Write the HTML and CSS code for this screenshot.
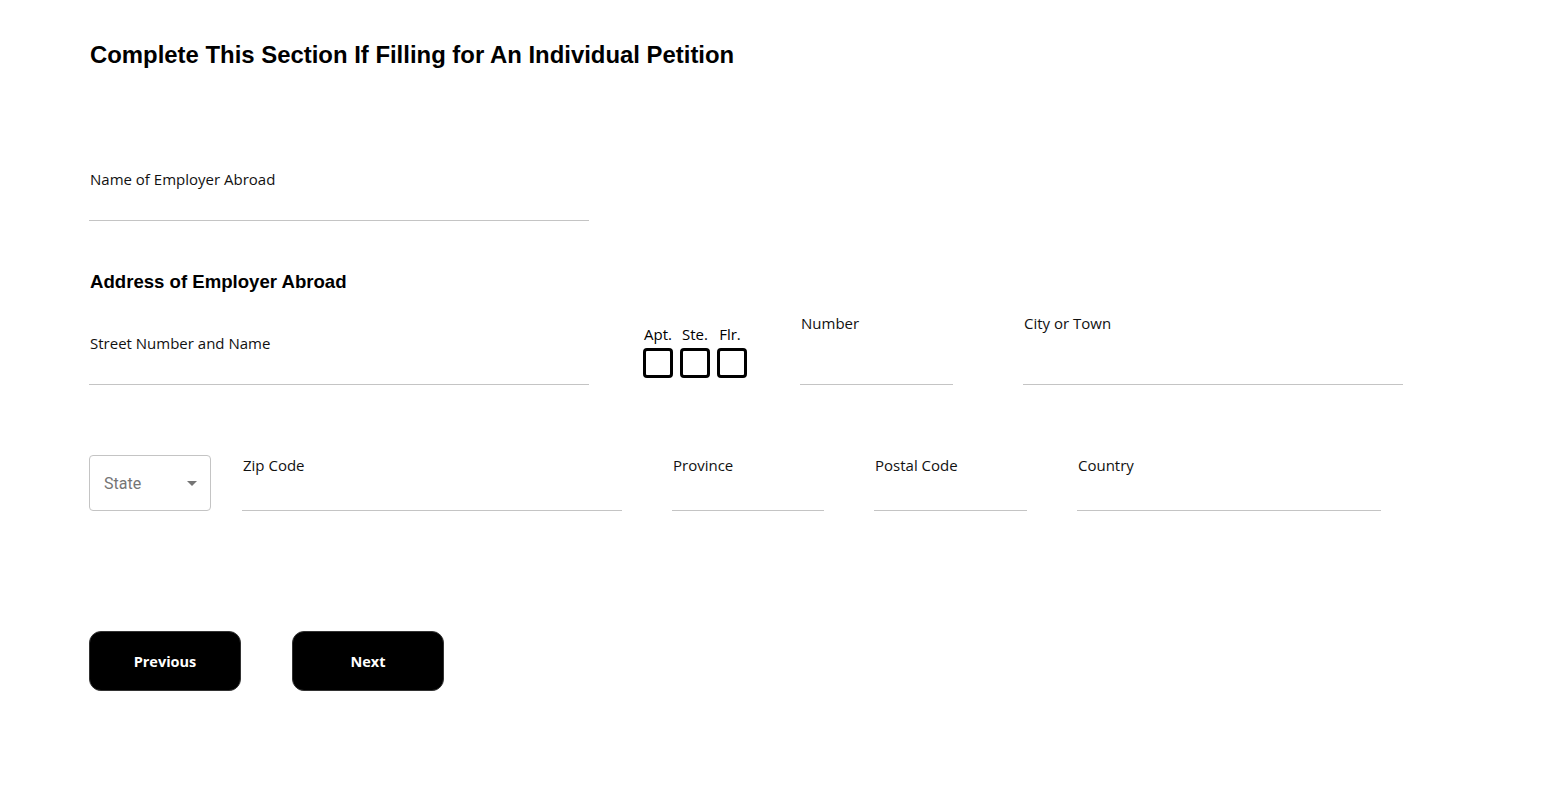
FILE: index.html
```html
<!DOCTYPE html>
<html>
<head>
<meta charset="utf-8">
<link rel="stylesheet" href="styles.css">
</head>
<body>
<main class="page">
  <h1 class="title">Complete This Section If Filling for An Individual Petition</h1>

  <div class="field field-name">
    <label class="label">Name of Employer Abroad</label>
    <div class="input w500"></div>
  </div>

  <h2 class="subtitle">Address of Employer Abroad</h2>

  <div class="row row1">
    <div class="field">
      <label class="label">Street Number and Name</label>
      <div class="input w500"></div>
    </div>
    <div class="unit-group">
      <div class="unit"><span class="unit-label">Apt.</span><span class="box"></span></div>
      <div class="unit"><span class="unit-label">Ste.</span><span class="box"></span></div>
      <div class="unit"><span class="unit-label unit-label-flr">Flr.</span><span class="box"></span></div>
    </div>
    <div class="field field-number">
      <label class="label">Number</label>
      <div class="input tall w153"></div>
    </div>
    <div class="field field-city">
      <label class="label">City or Town</label>
      <div class="input tall w380"></div>
    </div>
  </div>

  <div class="row row2">
    <div class="select">
      <span class="select-text">State</span>
      <span class="caret"></span>
    </div>
    <div class="field field-zip">
      <label class="label">Zip Code</label>
      <div class="input mid w380"></div>
    </div>
    <div class="field gap50">
      <label class="label">Province</label>
      <div class="input mid w152"></div>
    </div>
    <div class="field gap50">
      <label class="label">Postal Code</label>
      <div class="input mid w153"></div>
    </div>
    <div class="field gap50">
      <label class="label">Country</label>
      <div class="input mid w304"></div>
    </div>
  </div>

  <div class="actions">
    <button class="btn">Previous</button>
    <button class="btn">Next</button>
  </div>
</main>
</body>
</html>
```

FILE: styles.css
```css
html, body {
  margin: 0;
  padding: 0;
  background: #ffffff;
}

.page {
  padding: 40px 0 0 89px;
  font-family: "Open Sans", "Noto Sans", sans-serif;
  color: #000;
}

.title {
  margin: 0 0 0 1px;
  font-family: "Liberation Sans", Arial, sans-serif;
  font-weight: 700;
  font-size: 23.9px;
  line-height: 29px;
}

.field {
  display: flex;
  flex-direction: column;
}

.field-name {
  margin-top: 100px;
}

.label {
  display: block;
  font-size: 15px;
  line-height: 20px;
  color: #111;
  padding-left: 1px;
  white-space: nowrap;
}

.input {
  height: 31px;
  border-bottom: 1px solid #c4c4c4;
}

.input.tall { height: 51px; }
.input.mid { height: 35px; }

.w500 { width: 500px; }
.w380 { width: 380px; }
.w304 { width: 304px; }
.w153 { width: 153px; }
.w152 { width: 152px; }

.subtitle {
  margin: 50px 0 0 1px;
  font-family: "Liberation Sans", Arial, sans-serif;
  font-weight: 700;
  font-size: 18.6px;
  line-height: 21px;
}

.row {
  display: flex;
  align-items: flex-end;
}

.row1 {
  margin-top: 21px;
}

.unit-group {
  display: flex;
  gap: 7px;
  margin: 0 0 7px 54px;
}

.unit {
  display: flex;
  flex-direction: column;
  align-items: center;
  width: 30px;
}

.unit-label {
  font-size: 15px;
  line-height: 20px;
  margin-bottom: 4px;
  white-space: nowrap;
}

.unit-label-flr {
  margin-right: 4px;
}

.box {
  display: block;
  width: 24px;
  height: 24px;
  border: 3px solid #000;
  border-radius: 4px;
}

.field-number { margin-left: 53px; }
.field-city { margin-left: 70px; }

.row2 {
  margin-top: 70px;
}

.select {
  box-sizing: border-box;
  width: 122px;
  height: 56px;
  border: 1px solid #c4c4c4;
  border-radius: 4px;
  display: flex;
  align-items: center;
  padding: 0 13px 0 14px;
  font-family: Roboto, "Liberation Sans", sans-serif;
  font-size: 16px;
  color: #757575;
}

.select-text {
  flex: 1;
}

.caret {
  width: 0;
  height: 0;
  border-left: 5px solid transparent;
  border-right: 5px solid transparent;
  border-top: 5px solid #757575;
}

.field-zip { margin-left: 31px; }
.gap50 { margin-left: 50px; }

.actions {
  display: flex;
  gap: 51px;
  margin-top: 120px;
}

.btn {
  width: 152px;
  height: 60px;
  background: #000;
  color: #fff;
  border: 1px solid #333;
  border-radius: 12px;
  font-family: "Open Sans", "Noto Sans", sans-serif;
  font-weight: 700;
  font-size: 14.5px;
  cursor: pointer;
}
```
